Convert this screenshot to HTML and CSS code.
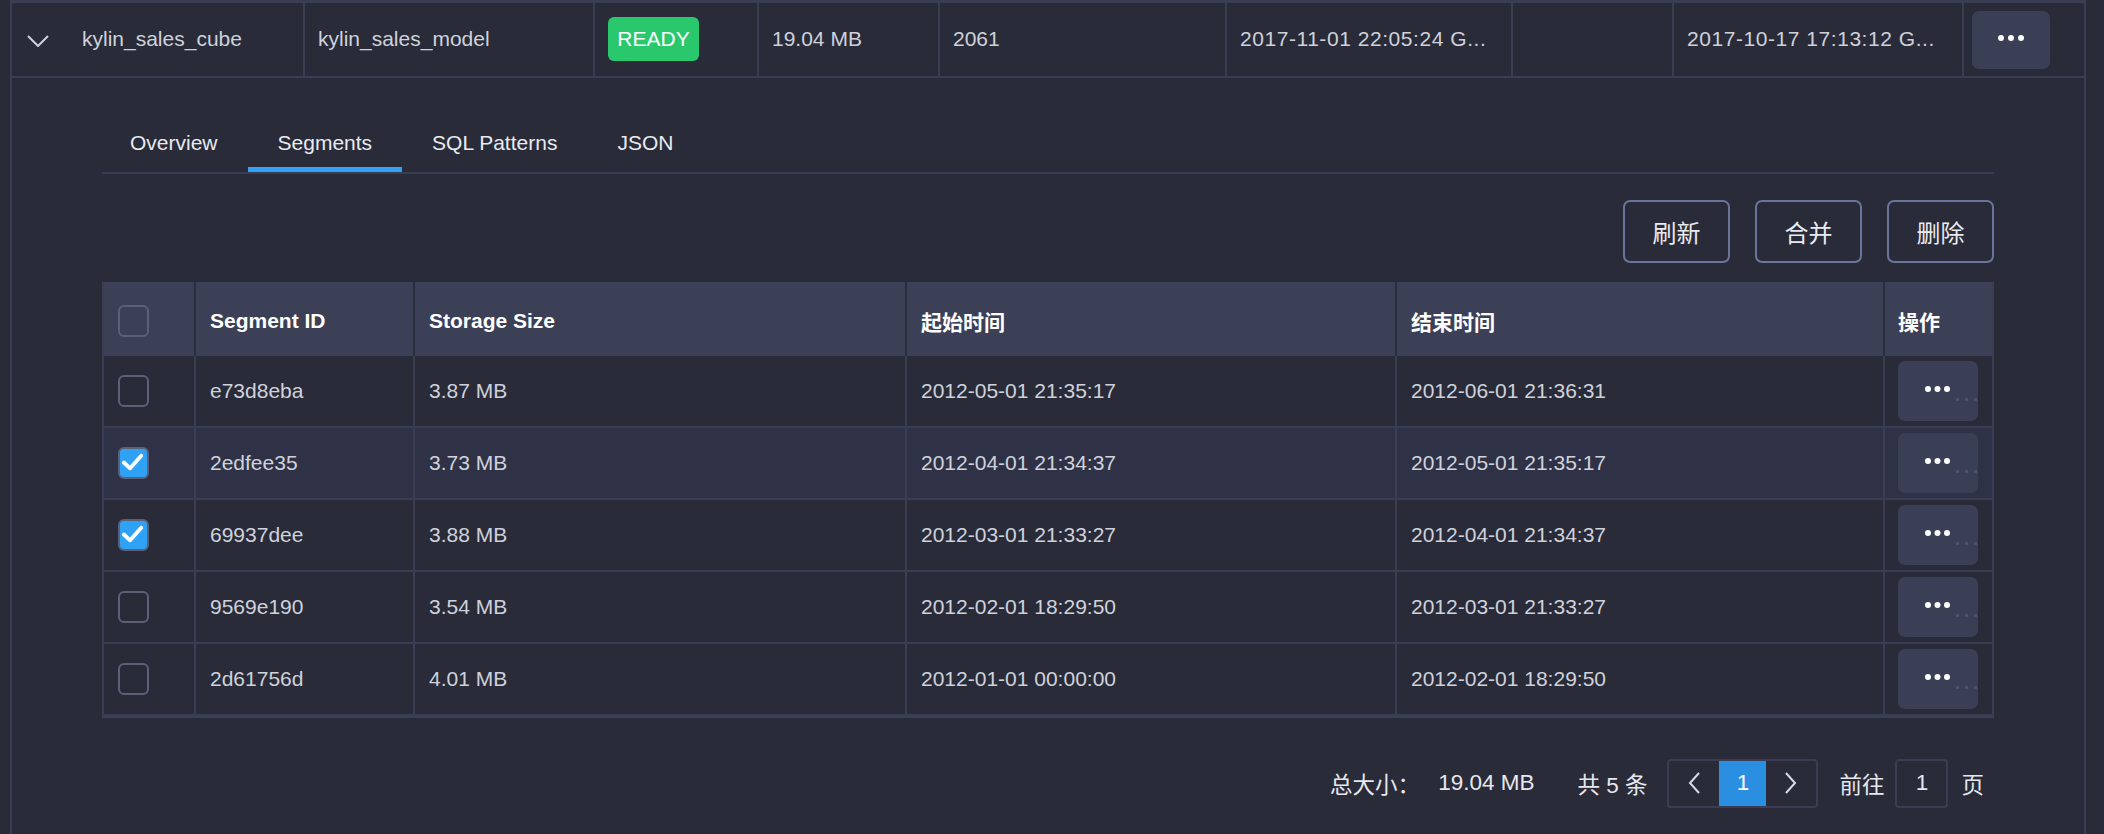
FILE: index.html
```html
<!DOCTYPE html>
<html lang="zh">
<head>
<meta charset="utf-8">
<title>Cube Segments</title>
<link rel="stylesheet" href="styles.css">
</head>
<body>
<div class="frame">
  <div class="cube-row">
    <div class="cell cell-name">
      <svg class="chevron" width="22" height="12" viewBox="0 0 22 12"><polyline points="1,1 11,11 21,1" fill="none" stroke="#cfd2db" stroke-width="2"/></svg>
      <span>kylin_sales_cube</span>
    </div>
    <div class="cell">kylin_sales_model</div>
    <div class="cell"><span class="badge">READY</span></div>
    <div class="cell">19.04 MB</div>
    <div class="cell">2061</div>
    <div class="cell cell-date">2017-11-01 22:05:24 G...</div>
    <div class="cell"></div>
    <div class="cell cell-date">2017-10-17 17:13:12 G...</div>
    <div class="cell cell-act">
      <div class="more more-top"><svg width="26" height="6" viewBox="0 0 26 6"><circle cx="3" cy="3" r="3" fill="#fff"/><circle cx="13" cy="3" r="3" fill="#fff"/><circle cx="23" cy="3" r="3" fill="#fff"/></svg></div>
    </div>
  </div>

  <div class="detail">
    <div class="tabs">
      <div class="tab">Overview</div>
      <div class="tab active">Segments</div>
      <div class="tab">SQL Patterns</div>
      <div class="tab">JSON</div>
    </div>

    <div class="toolbar">
      <div class="btn">刷新</div>
      <div class="btn">合并</div>
      <div class="btn">删除</div>
    </div>

    <div class="table">
      <div class="tr th">
        <div class="td"><span class="cb"></span></div>
        <div class="td">Segment ID</div>
        <div class="td">Storage Size</div>
        <div class="td">起始时间</div>
        <div class="td">结束时间</div>
        <div class="td">操作</div>
      </div>

      <div class="tr">
        <div class="td"><span class="cb"></span></div>
        <div class="td">e73d8eba</div>
        <div class="td">3.87 MB</div>
        <div class="td">2012-05-01 21:35:17</div>
        <div class="td">2012-06-01 21:36:31</div>
        <div class="td"><div class="more"><svg width="26" height="6" viewBox="0 0 26 6"><circle cx="3" cy="3" r="3" fill="#fff"/><circle cx="12.5" cy="3" r="3" fill="#fff"/><circle cx="22" cy="3" r="3" fill="#fff"/></svg><svg class="faint" width="22" height="4" viewBox="0 0 22 4"><rect x="0" y="0" width="3" height="3" fill="#4c5369"/><rect x="9" y="0" width="3" height="3" fill="#4c5369"/><rect x="18" y="0" width="3" height="3" fill="#4c5369"/></svg></div></div>
      </div>

      <div class="tr hover">
        <div class="td"><span class="cb on"><svg width="28" height="28" viewBox="0 0 28 28"><polyline points="4,13.5 10.5,19.5 22,6.5" fill="none" stroke="#fff" stroke-width="4" stroke-linecap="round" stroke-linejoin="round"/></svg></span></div>
        <div class="td">2edfee35</div>
        <div class="td">3.73 MB</div>
        <div class="td">2012-04-01 21:34:37</div>
        <div class="td">2012-05-01 21:35:17</div>
        <div class="td"><div class="more"><svg width="26" height="6" viewBox="0 0 26 6"><circle cx="3" cy="3" r="3" fill="#fff"/><circle cx="12.5" cy="3" r="3" fill="#fff"/><circle cx="22" cy="3" r="3" fill="#fff"/></svg><svg class="faint" width="22" height="4" viewBox="0 0 22 4"><rect x="0" y="0" width="3" height="3" fill="#4c5369"/><rect x="9" y="0" width="3" height="3" fill="#4c5369"/><rect x="18" y="0" width="3" height="3" fill="#4c5369"/></svg></div></div>
      </div>

      <div class="tr">
        <div class="td"><span class="cb on"><svg width="28" height="28" viewBox="0 0 28 28"><polyline points="4,13.5 10.5,19.5 22,6.5" fill="none" stroke="#fff" stroke-width="4" stroke-linecap="round" stroke-linejoin="round"/></svg></span></div>
        <div class="td">69937dee</div>
        <div class="td">3.88 MB</div>
        <div class="td">2012-03-01 21:33:27</div>
        <div class="td">2012-04-01 21:34:37</div>
        <div class="td"><div class="more"><svg width="26" height="6" viewBox="0 0 26 6"><circle cx="3" cy="3" r="3" fill="#fff"/><circle cx="12.5" cy="3" r="3" fill="#fff"/><circle cx="22" cy="3" r="3" fill="#fff"/></svg><svg class="faint" width="22" height="4" viewBox="0 0 22 4"><rect x="0" y="0" width="3" height="3" fill="#4c5369"/><rect x="9" y="0" width="3" height="3" fill="#4c5369"/><rect x="18" y="0" width="3" height="3" fill="#4c5369"/></svg></div></div>
      </div>

      <div class="tr">
        <div class="td"><span class="cb"></span></div>
        <div class="td">9569e190</div>
        <div class="td">3.54 MB</div>
        <div class="td">2012-02-01 18:29:50</div>
        <div class="td">2012-03-01 21:33:27</div>
        <div class="td"><div class="more"><svg width="26" height="6" viewBox="0 0 26 6"><circle cx="3" cy="3" r="3" fill="#fff"/><circle cx="12.5" cy="3" r="3" fill="#fff"/><circle cx="22" cy="3" r="3" fill="#fff"/></svg><svg class="faint" width="22" height="4" viewBox="0 0 22 4"><rect x="0" y="0" width="3" height="3" fill="#4c5369"/><rect x="9" y="0" width="3" height="3" fill="#4c5369"/><rect x="18" y="0" width="3" height="3" fill="#4c5369"/></svg></div></div>
      </div>

      <div class="tr">
        <div class="td"><span class="cb"></span></div>
        <div class="td">2d61756d</div>
        <div class="td">4.01 MB</div>
        <div class="td">2012-01-01 00:00:00</div>
        <div class="td">2012-02-01 18:29:50</div>
        <div class="td"><div class="more"><svg width="26" height="6" viewBox="0 0 26 6"><circle cx="3" cy="3" r="3" fill="#fff"/><circle cx="12.5" cy="3" r="3" fill="#fff"/><circle cx="22" cy="3" r="3" fill="#fff"/></svg><svg class="faint" width="22" height="4" viewBox="0 0 22 4"><rect x="0" y="0" width="3" height="3" fill="#4c5369"/><rect x="9" y="0" width="3" height="3" fill="#4c5369"/><rect x="18" y="0" width="3" height="3" fill="#4c5369"/></svg></div></div>
      </div>
    </div>

    <div class="pager-bar">
      <span class="p-label">总大小：</span>
      <span class="p-total">19.04 MB</span>
      <span class="p-count">共 5 条</span>
      <div class="pager">
        <div class="pg-btn"><svg width="14" height="22" viewBox="0 0 14 22"><polyline points="12,1 3,11 12,21" fill="none" stroke="#d8dae2" stroke-width="2"/></svg></div>
        <div class="pg-num">1</div>
        <div class="pg-btn"><svg width="14" height="22" viewBox="0 0 14 22"><polyline points="2,1 11,11 2,21" fill="none" stroke="#d8dae2" stroke-width="2"/></svg></div>
      </div>
      <span class="p-goto">前往</span>
      <div class="p-input">1</div>
      <span class="p-page">页</span>
    </div>
  </div>
</div>
</body>
</html>
```

FILE: styles.css
```css
* {
  box-sizing: border-box;
}

html,
body {
  margin: 0;
  padding: 0;
}

body {
  width: 2104px;
  height: 834px;
  overflow: hidden;
  background: #292b39;
  font-family: "Liberation Sans", "Noto Sans CJK SC", Arial, sans-serif;
  font-size: 21px;
  color: #cfd2db;
}

.frame {
  margin-left: 10px;
  width: 2076px;
  min-height: 834px;
  border-left: 2px solid #3a3e52;
  border-right: 2px solid #3a3e52;
}

/* ---------- top cube row ---------- */
.cube-row {
  display: grid;
  grid-template-columns: 293px 290px 164px 181px 287px 286px 161px 290px 1fr;
  height: 78px;
  border-top: 3px solid #3a3e52;
  border-bottom: 2px solid #3a3e52;
}

.cell {
  display: flex;
  align-items: center;
  padding-left: 13px;
  padding-bottom: 2px;
  border-right: 2px solid #3a3e52;
  white-space: nowrap;
  overflow: hidden;
}

.cell-name {
  padding-left: 15px;
  gap: 33px;
}

.cell-date {
  letter-spacing: 0.55px;
}

.chevron {
  flex: none;
  margin-top: 4px;
}

.cell-act {
  border-right: 0;
  padding-left: 8px;
  padding-bottom: 0;
}

.badge {
  display: inline-flex;
  align-items: center;
  justify-content: center;
  width: 91px;
  height: 44px;
  border-radius: 6px;
  background: #29c86d;
  color: #fff;
  font-size: 21px;
}

.more {
  position: relative;
  display: flex;
  align-items: center;
  justify-content: center;
  width: 80px;
  height: 60px;
  border-radius: 7px;
  background: #3b3f56;
}

.more > svg:first-child {
  margin-top: -4px;
}

.more-top {
  width: 78px;
  height: 58px;
}

.more .faint {
  position: absolute;
  left: 58px;
  top: 37px;
}

/* ---------- detail ---------- */
.detail {
  padding: 0 90px;
}

.tabs {
  display: flex;
  margin-top: 42px;
  border-bottom: 2px solid #3a3e52;
}

.tab {
  padding: 0 30px 1px;
  line-height: 46px;
  border-bottom: 5px solid transparent;
  color: #e8eaf0;
  font-size: 21px;
}

.tab:first-child {
  padding-left: 28px;
}

.tab.active {
  border-bottom-color: #31a2f5;
}

.toolbar {
  display: flex;
  justify-content: flex-end;
  gap: 25px;
  margin-top: 26px;
}

.btn {
  display: flex;
  align-items: center;
  justify-content: center;
  width: 107px;
  height: 63px;
  border: 2px solid #69759a;
  border-radius: 7px;
  color: #e8eaf0;
  font-size: 24px;
}

/* ---------- table ---------- */
.table {
  margin-top: 19px;
  border-left: 2px solid #3a3e52;
  border-right: 2px solid #3a3e52;
  border-bottom: 2px solid #3c4057;
}

.tr {
  display: grid;
  grid-template-columns: 92px 219px 492px 490px 488px 1fr;
  height: 72px;
  border-bottom: 2px solid #3a3e52;
}

.tr.hover {
  background: #2f3246;
}

.td {
  display: flex;
  align-items: center;
  padding-left: 14px;
  border-right: 2px solid #3a3e52;
  white-space: nowrap;
}

.td:last-child {
  border-right: 0;
  padding-left: 13px;
}

.th {
  height: 74px;
  border-bottom: 0;
  background: #3c4057;
  color: #fff;
  font-weight: bold;
}

.th .td {
  padding-top: 4px;
  border-right-color: #2c2e3c;
}

.cb {
  display: flex;
  align-items: center;
  justify-content: center;
  width: 31px;
  height: 32px;
  border: 2px solid #5b6078;
  border-radius: 6px;
}

.cb.on {
  background: #2fa2f5;
}

/* ---------- pagination ---------- */
.pager-bar {
  display: flex;
  justify-content: flex-end;
  align-items: center;
  height: 50px;
  margin-top: 40px;
  padding-right: 10px;
  font-size: 22.5px;
  color: #e6e8ee;
}

.p-total {
  margin-left: 18px;
}

.p-count {
  margin-left: 43px;
}

.pager {
  display: flex;
  height: 49px;
  margin-left: 20px;
  border: 2px solid #3a3e52;
  border-radius: 4px;
}

.pg-btn {
  display: flex;
  align-items: center;
  justify-content: center;
  width: 50px;
}

.pg-num {
  display: flex;
  align-items: center;
  justify-content: center;
  width: 47px;
  background: #2b8fe1;
  color: #fff;
}

.p-goto {
  margin-left: 21px;
}

.p-input {
  display: flex;
  align-items: center;
  justify-content: center;
  width: 53px;
  height: 49px;
  margin-left: 11px;
  border: 2px solid #3a3e52;
  border-radius: 4px;
}

.p-page {
  margin-left: 13px;
}
```
